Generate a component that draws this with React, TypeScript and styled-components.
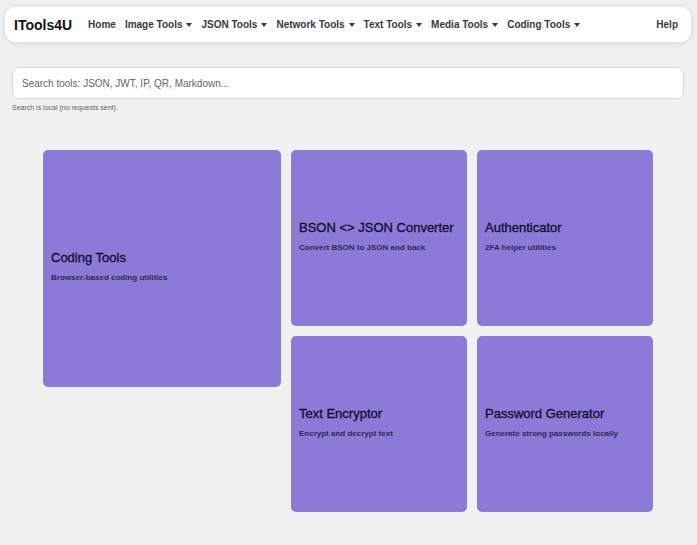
import { FC } from "react";
import styled, { createGlobalStyle } from "styled-components";

const GlobalStyle = createGlobalStyle`
  body {
    margin: 0;
    background-color: #f0f0f0;
    font-family: "Liberation Sans", Arial, sans-serif;
  }
`;

const Page = styled.div`
  padding: 7px 6px 40px 5px;
`;

const Navbar = styled.nav`
  height: 35px;
  display: flex;
  align-items: center;
  padding: 0 13px 0 9px;
  background-color: #ffffff;
  border-radius: 10px;
  box-shadow: 0 1px 6px rgba(0, 0, 0, 0.12);
`;

const Brand = styled.a`
  font-size: 14px;
  font-weight: 700;
  color: #111111;
  margin-right: 16px;
  text-decoration: none;
`;

const NavLinks = styled.div`
  display: flex;
  align-items: center;
  gap: 9px;
  flex: 1;
`;

const NavLink = styled.a<{ $dropdown?: boolean }>`
  font-size: 10px;
  font-weight: 700;
  color: #343a40;
  text-decoration: none;
  display: flex;
  align-items: center;
  white-space: nowrap;

  ${({ $dropdown }) =>
    $dropdown &&
    `
    &::after {
      content: "";
      margin-left: 4px;
      border-top: 4px solid #343a40;
      border-left: 3px solid transparent;
      border-right: 3px solid transparent;
    }
  `}
`;

const SearchArea = styled.div`
  margin: 25px 7px 0 7px;
`;

const SearchInput = styled.input`
  box-sizing: border-box;
  width: 100%;
  height: 32px;
  padding: 0 9px;
  border: 1px solid #d6d6d6;
  border-radius: 7px;
  background-color: #ffffff;
  font-family: "Liberation Sans", Arial, sans-serif;
  font-size: 10px;
  outline: none;

  &::placeholder {
    color: #646464;
  }
`;

const Hint = styled.div`
  margin-top: 5px;
  font-size: 7px;
  color: #5e5e5e;
`;

const Tiles = styled.div`
  width: 610px;
  margin: 39px auto 0;
  display: flex;
  align-items: flex-start;
  gap: 10px;
`;

const SmallGrid = styled.div`
  display: grid;
  grid-template-columns: repeat(2, 176px);
  grid-auto-rows: 176px;
  gap: 10px;
`;

const Tile = styled.a<{ $big?: boolean }>`
  box-sizing: border-box;
  width: ${({ $big }) => ($big ? "238px" : "176px")};
  height: ${({ $big }) => ($big ? "237px" : "176px")};
  display: flex;
  flex-direction: column;
  justify-content: center;
  padding: 0 8px 4px;
  background-color: #8b7ad8;
  border-radius: 5px;
  text-decoration: none;
  cursor: pointer;
`;

const TileTitle = styled.h3`
  margin: 0 0 7px;
  font-size: 13px;
  font-weight: 500;
  line-height: 16px;
  color: #120b2e;
  -webkit-text-stroke: 0.3px #120b2e;
`;

const TileText = styled.p`
  margin: 0;
  font-size: 8px;
  font-weight: 700;
  line-height: 10px;
  color: #2e2855;
`;

interface ToolTile {
  title: string;
  text: string;
}

const smallTiles: ToolTile[] = [
  { title: "BSON <> JSON Converter", text: "Convert BSON to JSON and back" },
  { title: "Authenticator", text: "2FA helper utilities" },
  { title: "Text Encryptor", text: "Encrypt and decrypt text" },
  { title: "Password Generator", text: "Generate strong passwords locally" },
];

const menus = [
  "Image Tools",
  "JSON Tools",
  "Network Tools",
  "Text Tools",
  "Media Tools",
  "Coding Tools",
];

const App: FC = () => {
  return (
    <Page>
      <GlobalStyle />
      <Navbar>
        <Brand>ITools4U</Brand>
        <NavLinks>
          <NavLink>Home</NavLink>
          {menus.map((m) => (
            <NavLink key={m} $dropdown>
              {m}
            </NavLink>
          ))}
        </NavLinks>
        <NavLink>Help</NavLink>
      </Navbar>

      <SearchArea>
        <SearchInput placeholder="Search tools: JSON, JWT, IP, QR, Markdown..." />
        <Hint>Search is local (no requests sent).</Hint>
      </SearchArea>

      <Tiles>
        <Tile $big>
          <TileTitle>Coding Tools</TileTitle>
          <TileText>Browser-based coding utilities</TileText>
        </Tile>
        <SmallGrid>
          {smallTiles.map((t) => (
            <Tile key={t.title}>
              <TileTitle>{t.title}</TileTitle>
              <TileText>{t.text}</TileText>
            </Tile>
          ))}
        </SmallGrid>
      </Tiles>
    </Page>
  );
};

export default App;
